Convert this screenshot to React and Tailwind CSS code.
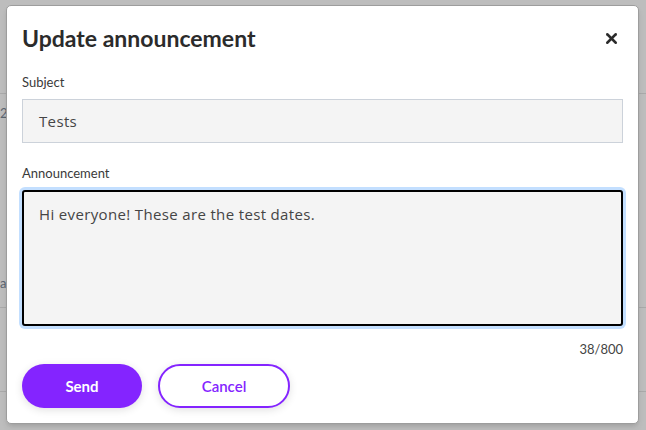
import React from 'react';
import { X } from 'lucide-react';

const font = { fontFamily: 'Lato, "Noto Sans", sans-serif' };
const bodyFont = { fontFamily: '"Open Sans", "Noto Sans", sans-serif' };

export default function App() {
  return (
    <div className="relative h-[430px] w-[646px] overflow-hidden bg-[#bdbdbd]" style={font}>
      {/* page behind the overlay */}
      <div className="flex flex-col text-[13px] text-[#5a6470]">
        <div className="h-[94px] border-b border-[#a9a9a9]" />
        <div className="flex h-[214px] flex-col justify-between border-b border-[#a9a9a9] pt-[10px] pb-[14px]">
          <span>2</span>
          <span>a</span>
        </div>
        <div className="h-[84px] border-b border-[#a9a9a9]" />
      </div>

      {/* modal */}
      <div className="absolute left-[6px] top-[5px] flex h-[419px] w-[633px] flex-col rounded-[5px] border border-[#9d9d9d] bg-white px-[15px] pt-[18px] shadow-md">
        <div className="flex items-center justify-between">
          <h2 className="text-[23px] font-bold leading-[28px] text-[#2b2b2b]">Update announcement</h2>
          <X size={17} strokeWidth={3.5} className="mr-[3px] text-[#2b2b2b]" />
        </div>

        <label className="mt-[21px] text-[13px] leading-[18px] text-[#3a3a3a]">Subject</label>
        <div className="mt-[8px] flex h-[44px] items-center border border-[#ccd2da] bg-[#f4f4f4] px-[16px] text-[15px] tracking-[0.35px] text-[#454545]" style={bodyFont}>
          Tests
        </div>

        <label className="mt-[21px] text-[13px] leading-[18px] text-[#3a3a3a]">Announcement</label>
        <div className="mt-[8px] h-[136px] rounded-[3px] border-2 border-black bg-[#f4f4f4] px-[15px] py-[11px] text-[15px] tracking-[0.35px] text-[#454545] shadow-[0_0_0_3px_#c3dfff]" style={bodyFont}>
          Hi everyone! These are the test dates.
        </div>
        <div className="mt-[14px] text-right text-[13px] leading-[18px] text-[#444]">38/800</div>

        <div className="mt-[6px] flex gap-[16px]">
          <button className="h-[44px] w-[120px] rounded-full bg-[#8424ff] text-[15px] font-bold text-white shadow-[0_2px_8px_rgba(0,0,0,0.12)]">
            Send
          </button>
          <button className="h-[44px] w-[132px] rounded-full border-2 border-[#8424ff] bg-white text-[15px] font-semibold text-[#8424ff] shadow-[0_2px_8px_rgba(0,0,0,0.12)]">
            Cancel
          </button>
        </div>
      </div>
    </div>
  );
}
